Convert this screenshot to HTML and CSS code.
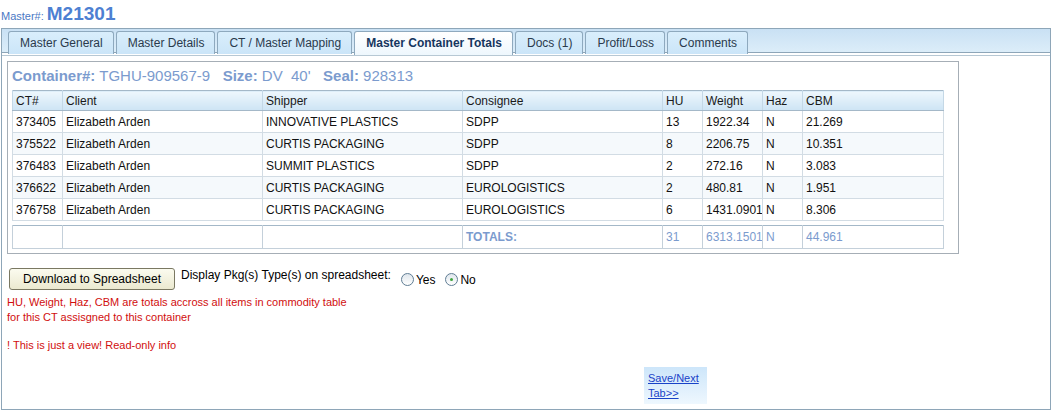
FILE: index.html
```html
<!DOCTYPE html>
<html>
<head>
<meta charset="utf-8">
<link rel="stylesheet" href="styles.css">
</head>
<body>
<div class="header"><span class="mlabel">Master#:</span> <span class="mnum">M21301</span></div>
<div class="panel">
  <div class="tabstrip">
    <div class="tab">Master General</div>
    <div class="tab">Master Details</div>
    <div class="tab">CT / Master Mapping</div>
    <div class="tab active">Master Container Totals</div>
    <div class="tab">Docs (1)</div>
    <div class="tab">Profit/Loss</div>
    <div class="tab">Comments</div>
  </div>
  <div class="content">
    <div class="box">
      <div class="heading"><b>Container#:</b> TGHU-909567-9 &nbsp;&nbsp;<b>Size:</b> DV&nbsp; 40' &nbsp;&nbsp;<b>Seal:</b> 928313</div>
      <table class="grid">
        <colgroup><col class="c1"><col class="c2"><col class="c3"><col class="c4"><col class="c5"><col class="c6"><col class="c7"><col class="c8"></colgroup>
        <thead>
          <tr><th>CT#</th><th>Client</th><th>Shipper</th><th>Consignee</th><th>HU</th><th>Weight</th><th>Haz</th><th>CBM</th></tr>
        </thead>
        <tbody>
          <tr><td>373405</td><td>Elizabeth Arden</td><td>INNOVATIVE PLASTICS</td><td>SDPP</td><td>13</td><td>1922.34</td><td>N</td><td>21.269</td></tr>
          <tr class="alt"><td>375522</td><td>Elizabeth Arden</td><td>CURTIS PACKAGING</td><td>SDPP</td><td>8</td><td>2206.75</td><td>N</td><td>10.351</td></tr>
          <tr><td>376483</td><td>Elizabeth Arden</td><td>SUMMIT PLASTICS</td><td>SDPP</td><td>2</td><td>272.16</td><td>N</td><td>3.083</td></tr>
          <tr class="alt"><td>376622</td><td>Elizabeth Arden</td><td>CURTIS PACKAGING</td><td>EUROLOGISTICS</td><td>2</td><td>480.81</td><td>N</td><td>1.951</td></tr>
          <tr><td>376758</td><td>Elizabeth Arden</td><td>CURTIS PACKAGING</td><td>EUROLOGISTICS</td><td>6</td><td class="clip">1431.0901</td><td>N</td><td>8.306</td></tr>
        </tbody>
      </table>
      <table class="grid totals">
        <colgroup><col class="c1"><col class="c2"><col class="c3"><col class="c4"><col class="c5"><col class="c6"><col class="c7"><col class="c8"></colgroup>
        <tr><td></td><td></td><td></td><td><b>TOTALS:</b></td><td>31</td><td class="clip">6313.1501</td><td>N</td><td>44.961</td></tr>
      </table>
    </div>
    <div class="controls">
      <button class="dl">Download to Spreadsheet</button>
      <span class="disp">Display Pkg(s) Type(s) on spreadsheet:</span>
      <span class="radio"></span><span class="rlabel">Yes</span>
      <span class="radio on"></span><span class="rlabel">No</span>
    </div>
    <div class="note">HU, Weight, Haz, CBM are totals accross all items in commodity table<br>for this CT assisgned to this container</div>
    <div class="note warn">! This is just a view! Read-only info</div>
    <div class="savebox"><a href="#">Save/Next<br>Tab&gt;&gt;</a></div>
  </div>
</div>
</body>
</html>
```
FILE: styles.css
```css
body {
  margin: 0;
  font-family: "Liberation Sans", Arial, sans-serif;
  font-size: 12px;
  color: #000;
  background: #fff;
}
.header {
  height: 28px;
  padding-left: 1px;
  display: flex;
  align-items: flex-end;
  gap: 3px;
  box-sizing: border-box;
  padding-bottom: 5px;
}
.mlabel {
  font-size: 11px;
  color: #4a78c4;
  margin-bottom: 1px;
}
.mnum {
  font-size: 19px;
  font-weight: bold;
  color: #4d80d2;
  line-height: 19px;
}
.panel {
  margin: 0 1px;
  border: 1px solid #8ea6b8;
  height: 382px;
  box-sizing: border-box;
  display: flex;
  flex-direction: column;
}
.tabstrip {
  display: flex;
  gap: 2px;
  padding: 2px 6px 0;
  background: linear-gradient(#c9e1f4, #dcedf9);
  border-bottom: 1px solid #8ea6b8;
  box-shadow: 0 2px 0 #fff, 0 3px 0 #b7c8d4;
  height: 24px;
  box-sizing: border-box;
  margin-bottom: 3px;
}
.tab {
  height: 22px;
  line-height: 22px;
  padding: 0 10px 0 11px;
  border: 1px solid #8ea9be;
  border-bottom: none;
  border-radius: 3px 3px 0 0;
  background: linear-gradient(#d9eefc, #cbe5f8);
  color: #2a3a4c;
}
.tab.active {
  background: linear-gradient(#ffffff, #eef7fd);
  font-weight: bold;
  color: #16365e;
  height: 23px;
  margin-bottom: -1px;
}
.content {
  padding: 5px 5px 0;
  flex: 1;
}
.box {
  width: 952px;
  box-sizing: border-box;
  border: 1px solid #a6aeb6;
  padding: 3px 4px 4px;
}
.heading {
  font-size: 15px;
  color: #7b9bce;
  height: 22px;
  line-height: 22px;
  margin-bottom: 3px;
}
.grid {
  border-collapse: collapse;
  table-layout: fixed;
  width: 931px;
  border: 1px solid #a4b8c8;
}
.c1 { width: 50px; }
.c2 { width: 200px; }
.c3 { width: 200px; }
.c4 { width: 200px; }
.c5 { width: 40px; }
.c6 { width: 60px; }
.c7 { width: 40px; }
.c8 { width: 141px; }
.grid th, .grid td {
  text-align: left;
  font-weight: normal;
  padding: 0 3px;
  white-space: nowrap;
  overflow: hidden;
  border: 1px solid #d2dce4;
  border-top: none;
}
.grid td.clip {
  padding-right: 0;
  text-overflow: clip;
}
.grid th {
  height: 19px;
  background: linear-gradient(#eef7fd, #cde4f4);
  border-color: #c4d8e6;
  border-bottom: 1px solid #a4b8c8;
  color: #1a1a1a;
}
.grid td {
  height: 21px;
  color: #111;
}
.grid tr.alt td {
  background: #f5f9fc;
}
.totals {
  margin-top: 4px;
}
.totals td {
  height: 22px;
  color: #7b9bce;
  border-color: #c4d0da;
}
.controls {
  margin-top: 14px;
  display: flex;
  align-items: flex-start;
  height: 22px;
}
.dl {
  font-family: "Liberation Sans", Arial, sans-serif;
  font-size: 12px;
  margin: 0 0 0 2px;
  height: 22px;
  width: 166px;
  padding: 0;
  border: 1px solid #7a7862;
  border-radius: 3px;
  background: linear-gradient(#fbfbef, #ebe9d0);
  color: #000;
}
.disp {
  margin-left: 6px;
}
.radio {
  width: 13px;
  height: 13px;
  border: 1px solid #5f7d94;
  border-radius: 50%;
  box-sizing: border-box;
  background: linear-gradient(#dfe6ec, #fff);
  margin: 5px 2px 0 10px;
  position: relative;
}
.radio.on::after {
  content: "";
  position: absolute;
  left: 4px;
  top: 4px;
  width: 3px;
  height: 3px;
  border-radius: 50%;
  background: #3ea33e;
}
.rlabel {
  margin-top: 5px;
}
.note {
  color: #d10e0e;
  font-size: 11px;
  line-height: 15px;
  margin-top: 5px;
}
.warn {
  margin-top: 13px;
}
.savebox {
  margin: 14px 0 0 637px;
  width: 63px;
  height: 37px;
  box-sizing: border-box;
  padding: 4px 4px 0;
  background: linear-gradient(#cde6fa, #eef7fe);
  font-size: 11px;
  line-height: 15px;
}
.savebox a {
  color: #1842c8;
}
```
